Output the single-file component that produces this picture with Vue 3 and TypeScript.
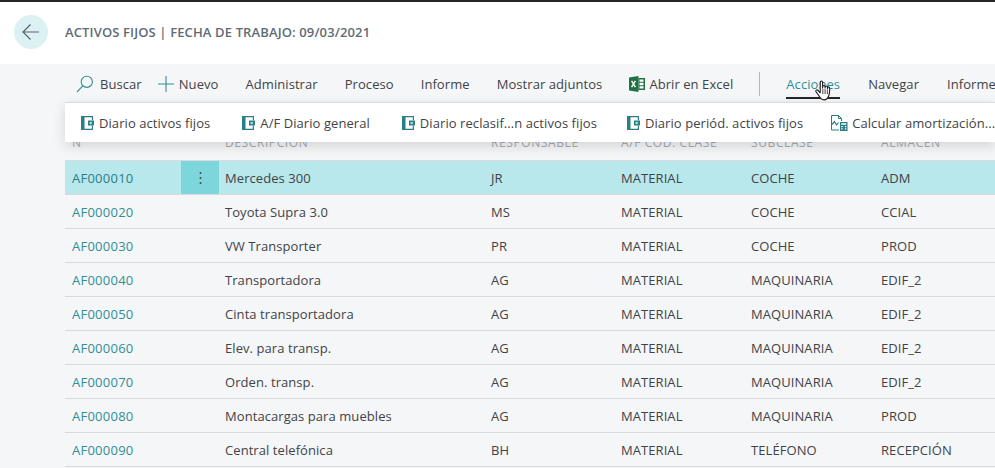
<script setup lang="ts">
interface Row {
  no: string
  desc: string
  resp: string
  clase: string
  sub: string
  alm: string
}

const rows: Row[] = [
  { no: 'AF000010', desc: 'Mercedes 300', resp: 'JR', clase: 'MATERIAL', sub: 'COCHE', alm: 'ADM' },
  { no: 'AF000020', desc: 'Toyota Supra 3.0', resp: 'MS', clase: 'MATERIAL', sub: 'COCHE', alm: 'CCIAL' },
  { no: 'AF000030', desc: 'VW Transporter', resp: 'PR', clase: 'MATERIAL', sub: 'COCHE', alm: 'PROD' },
  { no: 'AF000040', desc: 'Transportadora', resp: 'AG', clase: 'MATERIAL', sub: 'MAQUINARIA', alm: 'EDIF_2' },
  { no: 'AF000050', desc: 'Cinta transportadora', resp: 'AG', clase: 'MATERIAL', sub: 'MAQUINARIA', alm: 'EDIF_2' },
  { no: 'AF000060', desc: 'Elev. para transp.', resp: 'AG', clase: 'MATERIAL', sub: 'MAQUINARIA', alm: 'EDIF_2' },
  { no: 'AF000070', desc: 'Orden. transp.', resp: 'AG', clase: 'MATERIAL', sub: 'MAQUINARIA', alm: 'EDIF_2' },
  { no: 'AF000080', desc: 'Montacargas para muebles', resp: 'AG', clase: 'MATERIAL', sub: 'MAQUINARIA', alm: 'PROD' },
  { no: 'AF000090', desc: 'Central telefónica', resp: 'BH', clase: 'MATERIAL', sub: 'TELÉFONO', alm: 'RECEPCIÓN' }
]

const journals = ['Diario activos fijos', 'A/F Diario general', 'Diario reclasif...n activos fijos', 'Diario periód. activos fijos']
</script>

<template>
  <div class="page">
    <header class="header">
      <button class="back" type="button">
        <svg width="20" height="18" viewBox="0 0 20 18">
          <path d="M18 9H2M9.5 1.500 2 9l7.500 7.500" fill="none" stroke="#5f6368" stroke-width="1.200" />
        </svg>
      </button>
      <h1 class="title">ACTIVOS FIJOS | FECHA DE TRABAJO: 09/03/2021</h1>
    </header>

    <main class="main">
      <nav class="toolbar">
        <span class="tool search">
          <svg width="18" height="18" viewBox="0 0 18 18">
            <circle cx="10.800" cy="6.800" r="5.600" fill="none" stroke="#2f8f96" stroke-width="1.100" />
            <path d="M6.800 10.800 1 16.800" fill="none" stroke="#2f8f96" stroke-width="1.200" />
          </svg>
          Buscar
        </span>
        <span class="tool nuevo">
          <svg width="16" height="16" viewBox="0 0 16 16">
            <path d="M8 0v16M0 8h16" fill="none" stroke="#2f8f96" stroke-width="1.100" />
          </svg>
          Nuevo
        </span>
        <span class="tool admin">Administrar</span>
        <span class="tool">Proceso</span>
        <span class="tool">Informe</span>
        <span class="tool">Mostrar adjuntos</span>
        <span class="tool excel">
          <svg width="16" height="16" viewBox="0 0 16 16">
            <path d="M0 1.500 9.500 0v16L0 14.500z" fill="#1f7244" />
            <path d="M2.600 4.800 6.400 11.200M6.400 4.800 2.600 11.200" fill="none" stroke="#fff" stroke-width="1.400" />
            <path d="M9.500 2h6.500v12H9.500z" fill="#1f7244" />
            <path d="M10.500 3.400h4v2.400h-4zM10.500 6.800h4v2.400h-4zM10.500 10.200h4v2.400h-4z" fill="#fff" />
          </svg>
          Abrir en Excel
        </span>
        <span class="sep" />
        <span class="tool active">Acciones</span>
        <span class="tool navegar">Navegar</span>
        <span class="tool informe-end">Informe</span>

        <svg class="cursor" width="20" height="26" viewBox="0 0 24 29">
          <path
            d="M7.500 2.600c0-1.800 2.800-1.800 2.800 0v7.200l.2-2c.2-1.600 2.600-1.500 2.700.1l.1 1.900.2-1.400c.3-1.500 2.500-1.300 2.600.2l.1 1.800.3-1c.4-1.300 2.300-1 2.300.5.1 3.200 0 6.400-1.100 9-1 2.400-2.700 5-5.600 5-3.500 0-5.300-2.900-6.600-5.500L2.300 14c-.8-1.500 1.100-2.800 2.300-1.600l2.900 3z"
            fill="#fff"
            stroke="#1f1f1f"
            stroke-width="1.300"
            stroke-linejoin="round"
          />
          <path d="M10.600 11v6M13.300 11v6M16 11.500V17" fill="none" stroke="#1f1f1f" stroke-width="1" />
        </svg>
      </nav>

      <div class="panel">
        <span v-for="item in journals" :key="item" class="panel-item">
          <svg width="13" height="14" viewBox="0 0 13 14">
            <path d="M0 0h12v4.200h-1.200V1.200H3.500v11.600h7.300V9.800H12V14H0z" fill="#2b7d86" />
            <path d="M7 4.500h6v5H7z" fill="#2b7d86" />
            <circle cx="9.700" cy="7" r="1.300" fill="#a8dde0" />
          </svg>
          {{ item }}
        </span>
        <span class="panel-item calc">
          <svg width="17" height="16" viewBox="0 0 17 16">
            <path d="M.5.500h7l3 3V6M7.500.500v3h3M.5.500v14.500h7.500" fill="none" stroke="#2b7d86" />
            <path d="M1 9.500l2.500-3 2 3.500 2-2.500" fill="none" stroke="#2b7d86" stroke-width="1.200" />
            <path d="M9 7h7.500v9H9z" fill="#2b7d86" />
            <path d="M10.200 8.200h5.100v1.500h-5.100zM10.200 11h1.500v1.300h-1.500zM13.800 11h1.500v1.300h-1.500zM10.200 13.300h1.500v1.300h-1.500zM13.800 13.300h1.500v1.300h-1.500z" fill="#fff" />
          </svg>
          Calcular amortización...
        </span>
      </div>

      <section class="table">
        <div class="row head">
          <span class="cell no">N</span>
          <span class="cell dots" />
          <span class="cell desc">DESCRIPCIÓN</span>
          <span class="cell col">RESPONSABLE</span>
          <span class="cell col">A/F COD. CLASE</span>
          <span class="cell col">SUBCLASE</span>
          <span class="cell col">ALMACÉN</span>
        </div>
        <div v-for="(row, i) in rows" :key="row.no" class="row" :class="{ selected: i === 0 }">
          <span class="cell no">{{ row.no }}</span>
          <span class="cell dots">
            <template v-if="i === 0">
              <svg width="3" height="14" viewBox="0 0 3 14">
                <circle cx="1.500" cy="2" r="1" fill="#3d4a50" />
                <circle cx="1.500" cy="7" r="1" fill="#3d4a50" />
                <circle cx="1.500" cy="12" r="1" fill="#3d4a50" />
              </svg>
            </template>
          </span>
          <span class="cell desc">{{ row.desc }}</span>
          <span class="cell col">{{ row.resp }}</span>
          <span class="cell col">{{ row.clase }}</span>
          <span class="cell col">{{ row.sub }}</span>
          <span class="cell col">{{ row.alm }}</span>
        </div>
      </section>
    </main>
  </div>
</template>

<style>
html,
body {
  margin: 0;
  overflow: hidden;
}
</style>

<style scoped>
.page {
  width: 995px;
  height: 468px;
  overflow: hidden;
  border-top: 2px solid #262626;
  box-sizing: border-box;
  background: #f5f6f8;
  font-family: "Open Sans", "Noto Sans", sans-serif;
  font-size: 13px;
  letter-spacing: 0.07px;
  color: #3f4347;
}

.header {
  height: 62px;
  background: #fff;
  display: flex;
  align-items: center;
  padding-left: 14px;
  padding-bottom: 2px;
  box-sizing: border-box;
}

.back {
  width: 34px;
  height: 34px;
  border: none;
  border-radius: 50%;
  background: #dcf1f2;
  padding: 0;
  display: flex;
  align-items: center;
  justify-content: center;
}

.title {
  margin: 0 0 0 17px;
  font-size: 13px;
  font-weight: 600;
  letter-spacing: 0.13px;
  color: #5f6b76;
}

.main {
  position: relative;
  padding-left: 65px;
}

.toolbar {
  position: relative;
  height: 39px;
  margin-left: 11px;
  display: flex;
  align-items: center;
  white-space: nowrap;
  gap: 27px;
}

.tool {
  display: flex;
  align-items: center;
  line-height: 38px;
  height: 38px;
  flex: none;
}

.search {
  gap: 6px;
}

.nuevo {
  gap: 5px;
  margin-left: -11px;
}

.excel {
  gap: 4px;
}

.sep {
  width: 1px;
  height: 24px;
  margin: 0 -1px;
  background: #b4b8bc;
  flex: none;
}

.active {
  color: #2f8f96;
  position: relative;
}

.active::after {
  content: "";
  position: absolute;
  left: 0;
  right: 0;
  bottom: 4px;
  height: 2px;
  background: #262626;
}

.navegar {
  margin-left: 1px;
}

.informe-end {
  margin-left: 1px;
}

.cursor {
  position: absolute;
  left: 738px;
  top: 15px;
}

.panel {
  position: absolute;
  top: 38px;
  left: 65px;
  right: 0;
  height: 40px;
  box-sizing: border-box;
  background: #fff;
  border-top: 1px solid #d9dadc;
  box-shadow: 0 4px 12px rgba(0, 0, 0, 0.14);
  display: flex;
  align-items: center;
  padding-left: 16px;
  gap: 32px;
  white-space: nowrap;
  z-index: 2;
}

.panel-item {
  display: flex;
  align-items: center;
  gap: 5px;
  flex: none;
}

.panel-item:nth-child(4) {
  margin-left: -2px;
}

.calc {
  gap: 4px;
  margin-left: -4px;
}

.row {
  display: flex;
  height: 34px;
  box-sizing: border-box;
  border-bottom: 1px solid #d8dadd;
}

.head {
  height: 58px;
  padding-top: 21px;
  font-size: 12px;
  letter-spacing: 0.6px;
  color: #a6aab0;
}

.selected {
  background: #b8e8ec;
}

.cell {
  display: flex;
  align-items: center;
  height: 100%;
  flex: none;
  white-space: nowrap;
  box-sizing: border-box;
}

.no {
  width: 116px;
  padding-left: 7px;
  letter-spacing: 0.25px;
  color: #2f8f96;
}

.selected .no {
  color: #2b7d86;
}

.dots {
  width: 38px;
  justify-content: center;
}

.selected .dots {
  background: #7dd6dc;
}

.desc {
  width: 266px;
  padding-left: 6px;
}

.col {
  width: 130px;
  padding-left: 6px;
}

.head .no {
  color: #a6aab0;
}
</style>
